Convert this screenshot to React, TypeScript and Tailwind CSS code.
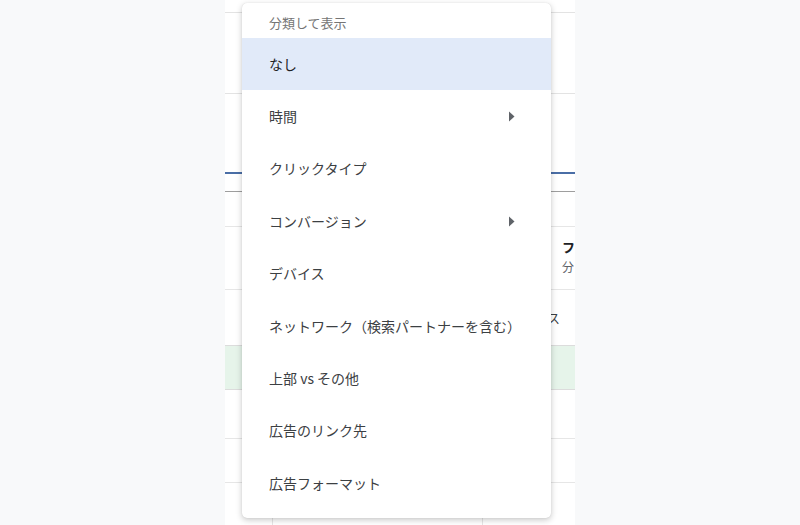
const items: { label: string; sub?: boolean; selected?: boolean }[] = [
  { label: "なし", selected: true },
  { label: "時間", sub: true },
  { label: "クリックタイプ" },
  { label: "コンバージョン", sub: true },
  { label: "デバイス" },
  { label: "ネットワーク（検索パートナーを含む）" },
  { label: "上部 vs その他" },
  { label: "広告のリンク先" },
  { label: "広告フォーマット" },
];

const SubArrow = () => (
  <svg width="7" height="11" viewBox="0 0 7 11" className="shrink-0">
    <path d="M1 0.5 L6.5 5.5 L1 10.5 Z" fill="#5f6368" />
  </svg>
);

export default function App() {
  return (
    <div
      className="relative flex h-[525px] w-[800px] overflow-hidden bg-[#f8f9fa]"
      style={{ fontFamily: '"Noto Sans CJK JP", "Noto Sans", sans-serif' }}
    >
      <div className="w-[225px] shrink-0" />

      {/* table behind the menu */}
      <div className="flex w-[350px] shrink-0 flex-col overflow-hidden bg-white">
        <div className="h-[13px] border-b border-[#e3e3e3]" />
        <div className="h-[81px] border-b border-[#e3e3e3]" />
        <div className="h-[80px] border-b-2 border-[#4a6ea6]" />
        <div className="h-[18px] border-b border-[#9e9e9e]" />
        <div className="h-[35px] border-b border-[#e6e6e6]" />
        <div className="flex h-[63px] justify-end border-b border-[#e6e6e6]">
          <div className="flex flex-col items-start pt-[10px] text-[12px] leading-[20px]">
            <span className="text-[13px] font-bold text-[#202124]">フ</span>
            <span className="text-[#5f6368]">分</span>
          </div>
        </div>
        <div className="flex h-[55px] items-center justify-end pr-[15px] text-[13px] text-[#3c4043]">
          ス
        </div>
        <div className="h-[45px] border-y border-[#dcdcdc] bg-[#e6f4ea]" />
        <div className="h-[49px] border-b border-[#e6e6e6]" />
        <div className="h-[44px] border-b border-[#e6e6e6]" />
        <div className="flex flex-1">
          <div className="w-[48px] border-r border-[#e6e6e6]" />
          <div className="w-[210px] border-r border-[#e6e6e6]" />
        </div>
      </div>

      <div className="flex-1" />

      {/* segment menu */}
      <div className="absolute left-[242px] top-[3px] w-[309px] rounded-[5px] bg-white pb-[8px] shadow-[0_2px_6px_rgba(0,0,0,0.22),0_0_1px_rgba(0,0,0,0.15)]">
        <div className="h-[35px] pl-[27px] pt-[12px] text-[13px] leading-[16px] text-[#757575]">
          分類して表示
        </div>
        {items.map((item) => (
          <div
            key={item.label}
            className={`flex h-[52.4px] items-center justify-between pl-[27px] pr-[36px] text-[14px] ${
              item.selected ? "bg-[#e1eaf9] text-[#202124]" : "text-[#3c4043]"
            }`}
          >
            <span>{item.label}</span>
            {item.sub && <SubArrow />}
          </div>
        ))}
      </div>
    </div>
  );
}
